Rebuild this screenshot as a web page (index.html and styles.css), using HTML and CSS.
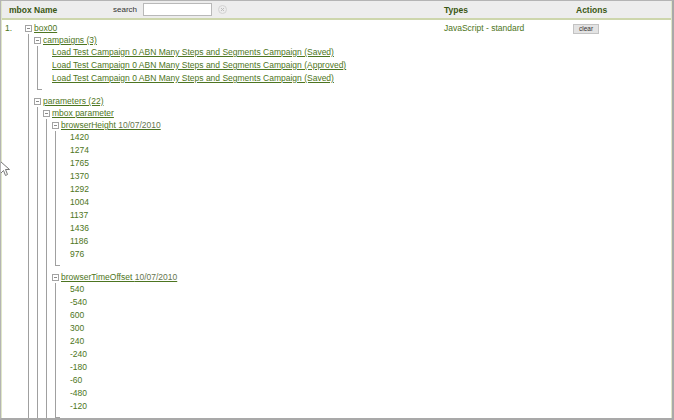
FILE: index.html
```html
<!DOCTYPE html>
<html>
<head>
<meta charset="utf-8">
<link rel="stylesheet" href="styles.css">
</head>
<body>
<div class="frame">
  <div class="inner">
    <div class="head">
      <div class="hcell hname">
        <span class="htitle">mbox Name</span>
        <span class="slabel">search</span>
        <input class="sinput" type="text">
        <svg class="sclear" width="9" height="9" viewBox="0 0 9 9"><circle cx="4.5" cy="4.5" r="4" fill="#ececec" stroke="#d2d2d2"/><path d="M3 3L6 6M6 3L3 6" stroke="#bdbdbd" stroke-width="1"/></svg>
      </div>
      <div class="hcell htypes">Types</div>
      <div class="hcell hactions">Actions</div>
    </div>
    <div class="row">
      <div class="cname">
        <span class="num">1.</span>
        <div class="tree">
          <div class="node">
            <div class="label"><span class="tog"></span><a href="#">box00</a></div>
            <div class="children">
              <div class="node">
                <div class="label"><span class="tog"></span><a href="#">campaigns (3)</a></div>
                <div class="children">
                  <div class="leaf"><a href="#">Load Test Campaign 0 ABN Many Steps and Segments Campaign (Saved)</a></div>
                  <div class="leaf"><a href="#">Load Test Campaign 0 ABN Many Steps and Segments Campaign (Approved)</a></div>
                  <div class="leaf"><a href="#">Load Test Campaign 0 ABN Many Steps and Segments Campaign (Saved)</a></div>
                </div>
              </div>
              <div class="node">
                <div class="label"><span class="tog"></span><a href="#">parameters (22)</a></div>
                <div class="children">
                  <div class="node">
                    <div class="label"><span class="tog"></span><a href="#">mbox parameter</a></div>
                    <div class="children">
                      <div class="node">
                        <div class="label"><span class="tog"></span><a href="#">browserHeight <span class="date">10/07/2010</span></a></div>
                        <div class="children">
                          <div class="leaf val">1420</div>
                          <div class="leaf val">1274</div>
                          <div class="leaf val">1765</div>
                          <div class="leaf val">1370</div>
                          <div class="leaf val">1292</div>
                          <div class="leaf val">1004</div>
                          <div class="leaf val">1137</div>
                          <div class="leaf val">1436</div>
                          <div class="leaf val">1186</div>
                          <div class="leaf val">976</div>
                        </div>
                      </div>
                      <div class="node">
                        <div class="label"><span class="tog"></span><a href="#">browserTimeOffset <span class="date">10/07/2010</span></a></div>
                        <div class="children">
                          <div class="leaf val">540</div>
                          <div class="leaf val">-540</div>
                          <div class="leaf val">600</div>
                          <div class="leaf val">300</div>
                          <div class="leaf val">240</div>
                          <div class="leaf val">-240</div>
                          <div class="leaf val">-180</div>
                          <div class="leaf val">-60</div>
                          <div class="leaf val">-480</div>
                          <div class="leaf val">-120</div>
                        </div>
                      </div>
                      <div class="spacer"></div>
                    </div>
                  </div>
                </div>
              </div>
            </div>
          </div>
        </div>
      </div>
      <div class="ctypes">JavaScript - standard</div>
      <div class="cactions"><button class="btn">clear</button></div>
    </div>
  </div>
  <svg class="cursor" width="10" height="20" viewBox="0 0 10 20"><path d="M0.5 3.5L0.5 15.5L3.5 12.5L5.5 17.5L7.5 16.5L5.5 11.5L9.5 11.5Z" fill="#fff" stroke="#777" stroke-width="1" stroke-linejoin="round"/></svg>
</div>
</body>
</html>
```

FILE: styles.css
```css
html, body {
  margin: 0;
  padding: 0;
  background: #fff;
}
body {
  width: 674px;
  height: 420px;
  overflow: hidden;
  font-family: "Liberation Sans", Arial, sans-serif;
  font-size: 8.5px;
  color: #4d7521;
}
.frame {
  position: relative;
  box-sizing: border-box;
  width: 674px;
  height: 420px;
  border-top: 1px solid #b4b4b4;
  border-left: 1px solid #b4b4b4;
  border-right: 2px solid #a9a9a9;
  border-bottom: 2px solid #a9a9a9;
  overflow: hidden;
}
.inner {
  box-sizing: border-box;
  height: 100%;
  border-left: 1px solid #dfe6c8;
  border-right: 1px solid #dfe6c8;
  overflow: hidden;
}
.head {
  display: grid;
  grid-template-columns: 439px 132px 1fr;
  height: 17px;
  background: #ededed;
  border-bottom: 2px solid #cdd6ac;
  color: #3a5714;
  font-weight: bold;
}
.hcell {
  display: flex;
  align-items: center;
}
.hname {
  padding-left: 7px;
}
.htitle {
  width: 104px;
}
.slabel {
  font-weight: normal;
  color: #333;
  font-size: 8px;
  width: 30px;
}
.sinput {
  box-sizing: border-box;
  width: 69px;
  height: 13px;
  margin: 0;
  padding: 0;
  border: 1px solid #b9b9b9;
  background: #fff;
}
.sclear {
  margin-left: 6px;
}
.htypes {
  padding-left: 3px;
}
.hactions {
  padding-left: 3px;
}
.row {
  display: grid;
  grid-template-columns: 439px 132px 1fr;
  padding-top: 2px;
}
.cname {
  display: flex;
  align-items: flex-start;
  padding-left: 3px;
}
.num {
  width: 20px;
  height: 12px;
  line-height: 12px;
}
.ctypes {
  padding-left: 3px;
  height: 12px;
  line-height: 12px;
}
.cactions {
  padding-top: 1px;
}
.btn {
  box-sizing: border-box;
  width: 26px;
  height: 10px;
  margin: 0;
  padding: 0;
  font-family: "Liberation Sans", Arial, sans-serif;
  font-size: 6.5px;
  line-height: 8px;
  color: #333;
  background: #e3e3e3;
  border: 1px solid #c3c3c3;
  border-radius: 0;
}
a {
  color: #4d7521;
  text-decoration: underline;
}
.date {
  color: #66764f;
}
.label {
  display: flex;
  align-items: center;
  height: 12px;
  white-space: nowrap;
}
.tog {
  box-sizing: border-box;
  width: 7px;
  height: 7px;
  margin-right: 2px;
  border: 1px solid #a3a3a3;
  background: #fff;
  flex: none;
}
.tog::after {
  content: "";
  display: block;
  margin: 2px 1px 0;
  height: 1px;
  background: #8c8c8c;
}
.children {
  margin-left: 3px;
  border-left: 1px solid #a0a0a0;
  padding-left: 5px;
  margin-bottom: 5px;
}
.children::after {
  content: "";
  display: block;
  width: 4px;
  height: 4px;
  margin-left: -5px;
  border-bottom: 1px solid #a0a0a0;
}
.spacer {
  height: 30px;
}
.leaf {
  padding-left: 9px;
  height: 13px;
  line-height: 13px;
  white-space: nowrap;
}
.cursor {
  position: absolute;
  left: -1px;
  top: 157px;
}
```
